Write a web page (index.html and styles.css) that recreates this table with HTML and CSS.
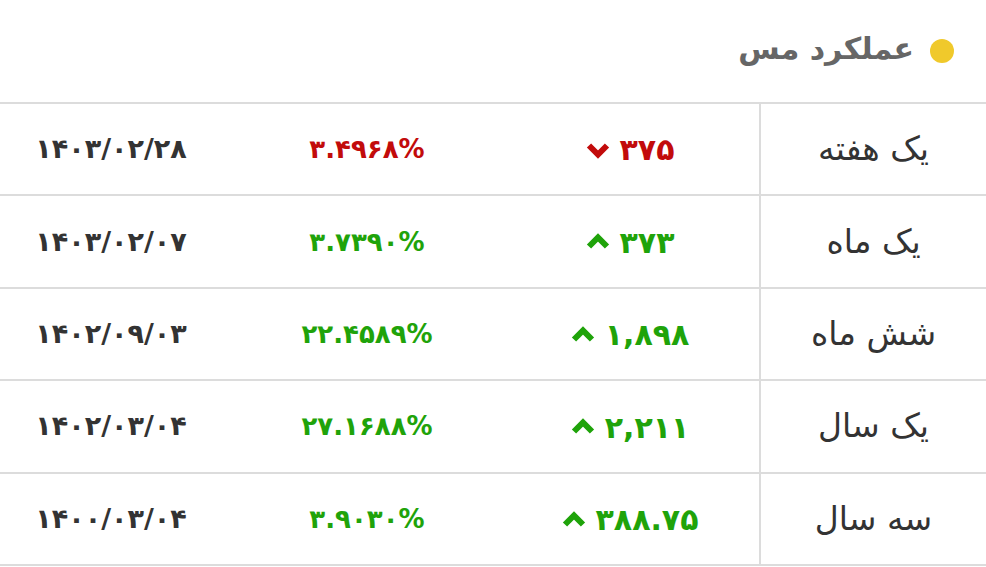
FILE: index.html
```html
<!DOCTYPE html>
<html lang="fa" dir="rtl">
<head>
<meta charset="utf-8">
<link rel="stylesheet" href="styles.css">
</head>
<body>
<div class="card">
  <div class="head">
    <span class="dot"></span>
    <h2 class="title">عملکرد مس</h2>
  </div>
  <table class="perf">
    <tr>
      <td class="label">یک هفته</td>
      <td class="chg down"><span class="num">۳۷۵</span><svg class="arr" viewBox="0 0 26 18"><path d="M4 4.5l9 9 9-9"/></svg></td>
      <td class="pct down"><span dir="ltr">۳.۴۹۶۸%</span></td>
      <td class="date"><span dir="ltr">۱۴۰۳/۰۲/۲۸</span></td>
    </tr>
    <tr>
      <td class="label">یک ماه</td>
      <td class="chg up"><span class="num">۳۷۳</span><svg class="arr" viewBox="0 0 26 18"><path d="M4 13.5l9-9 9 9"/></svg></td>
      <td class="pct up"><span dir="ltr">۳.۷۳۹۰%</span></td>
      <td class="date"><span dir="ltr">۱۴۰۳/۰۲/۰۷</span></td>
    </tr>
    <tr>
      <td class="label">شش ماه</td>
      <td class="chg up"><span class="num">۱,۸۹۸</span><svg class="arr" viewBox="0 0 26 18"><path d="M4 13.5l9-9 9 9"/></svg></td>
      <td class="pct up"><span dir="ltr">۲۲.۴۵۸۹%</span></td>
      <td class="date"><span dir="ltr">۱۴۰۲/۰۹/۰۳</span></td>
    </tr>
    <tr>
      <td class="label">یک سال</td>
      <td class="chg up"><span class="num">۲,۲۱۱</span><svg class="arr" viewBox="0 0 26 18"><path d="M4 13.5l9-9 9 9"/></svg></td>
      <td class="pct up"><span dir="ltr">۲۷.۱۶۸۸%</span></td>
      <td class="date"><span dir="ltr">۱۴۰۲/۰۳/۰۴</span></td>
    </tr>
    <tr>
      <td class="label">سه سال</td>
      <td class="chg up"><span class="num">۳۸۸.۷۵</span><svg class="arr" viewBox="0 0 26 18"><path d="M4 13.5l9-9 9 9"/></svg></td>
      <td class="pct up"><span dir="ltr">۳.۹۰۳۰%</span></td>
      <td class="date"><span dir="ltr">۱۴۰۰/۰۳/۰۴</span></td>
    </tr>
  </table>
</div>
</body>
</html>
```
FILE: styles.css
```css
html, body {
  margin: 0;
  padding: 0;
  background: #fff;
}
body {
  font-family: "DejaVu Sans", "Noto Sans", sans-serif;
  color: #333;
}
.card {
  width: 986px;
}
.head {
  height: 102px;
  display: flex;
  align-items: center;
  padding-right: 32px;
  gap: 16px;
  box-sizing: border-box;
}
.dot {
  width: 24px;
  height: 24px;
  border-radius: 50%;
  background: #f0c92b;
  flex: none;
}
.title {
  margin: 0;
  font-size: 30px;
  font-weight: bold;
  color: #666;
  line-height: 1;
  padding-bottom: 4px;
}
.perf {
  width: 100%;
  border-collapse: collapse;
  table-layout: fixed;
}
.perf td {
  height: 90.4px;
  border-top: 2px solid #dcdcdc;
  border-bottom: 2px solid #dcdcdc;
  text-align: center;
  vertical-align: middle;
  font-size: 26px;
  line-height: 40px;
  padding: 0;
}
.perf td.label {
  width: 225px;
  border-left: 2px solid #dcdcdc;
  color: #333;
  font-size: 33px;
}
.perf td.chg {
  width: 235px;
  font-weight: bold;
  font-size: 30px;
  padding-right: 12px;
}
.perf td.pct {
  width: 290px;
  font-weight: bold;
}
.perf td.date {
  font-weight: bold;
  color: #333;
  font-size: 27px;
}
.chg .num {
  vertical-align: middle;
}
.arr {
  width: 26px;
  height: 18px;
  margin-right: 9px;
  vertical-align: middle;
  fill: none;
  stroke-width: 6;
  stroke-linecap: butt;
  stroke-linejoin: miter;
}
.down { color: #c20b0b; }
.down .arr { stroke: #c20b0b; }
.up { color: #1fa30a; }
.up .arr { stroke: #1fa30a; }
```
